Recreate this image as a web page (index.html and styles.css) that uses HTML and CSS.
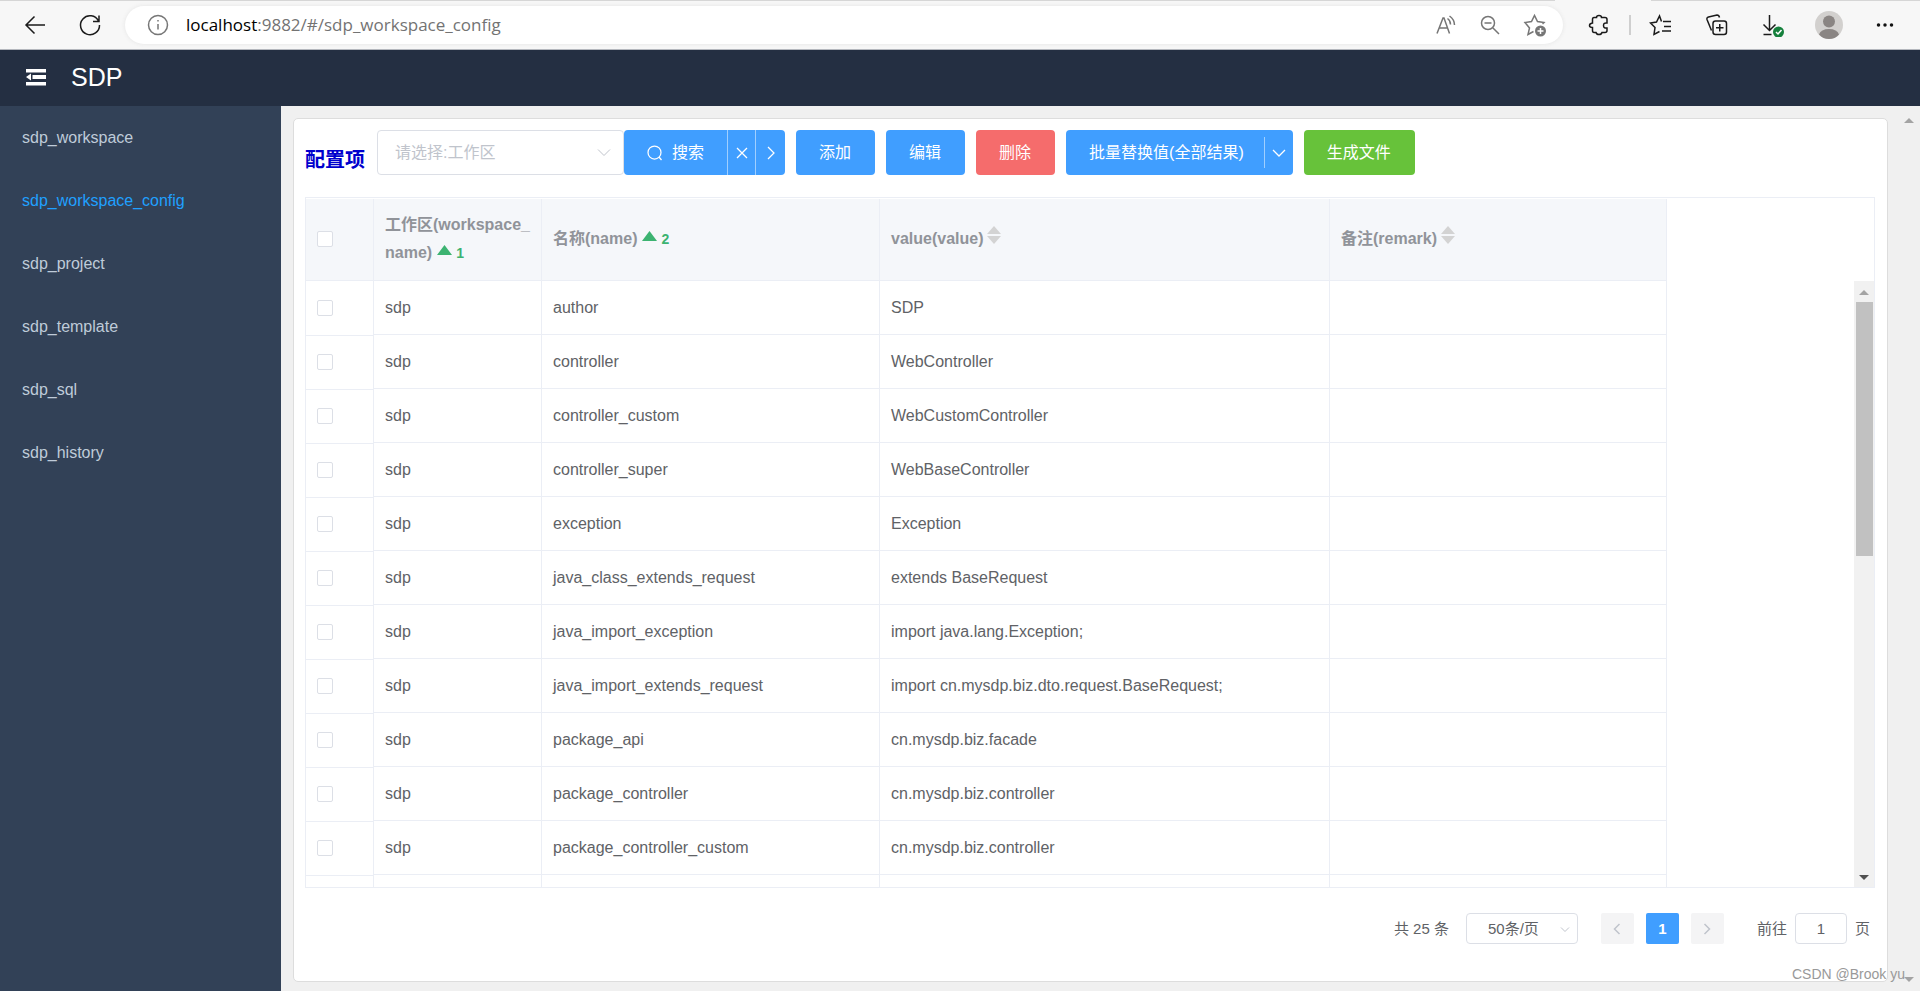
FILE: index.html
```html
<!DOCTYPE html>
<html lang="zh-CN">
<head>
<meta charset="utf-8">
<title>SDP</title>
<link rel="stylesheet" href="styles.css">
</head>
<body>
<header class="browser">
  <button class="tool back" aria-label="Back"><svg width="24" height="24" viewBox="0 0 24 24"><path d="M22 12H3M11.500 3.500L3 12l8.500 8.500"/></svg></button>
  <button class="tool reload" aria-label="Reload"><svg width="24" height="24" viewBox="0 0 24 24"><path d="M20.500 8A9.500 9.500 0 1 0 21.500 12M21 2.500V8.500h-6"/></svg></button>
  <div class="address">
    <svg class="muted" width="22" height="22" viewBox="0 0 22 22"><circle cx="11" cy="11" r="9.500"/><path d="M11 10v5.500M11 6v1.500"/></svg>
    <span class="url"><b>localhost</b>:9882/#/sdp_workspace_config</span>
    <button class="tool muted" aria-label="Read aloud"><svg width="22" height="22" viewBox="0 0 22 22"><path d="M2 19.500L8 4h1l5.500 15.500M4 14h8.500M12.500 4.500q3 2 3 6M14.500 2q5 3.500 5 9"/></svg></button>
    <button class="tool muted" aria-label="Zoom out"><svg width="22" height="22" viewBox="0 0 22 22"><circle cx="9" cy="9" r="6.500"/><path d="M14 14l6 6M5.500 9h7"/></svg></button>
    <button class="tool muted" aria-label="Add favorite"><svg width="24" height="24" viewBox="0 0 24 24"><path d="M10.500 18.500L5 21.500l1.500-6.500L2 9.500l6.500-1L11.500 2.500l3 6 6.500 1-1.500 1.500"/><circle class="grey-fill" cx="17.500" cy="18" r="5.500"/><path class="white-line" d="M17.500 15v6M14.500 18h6"/></svg></button>
  </div>
  <button class="tool ext" aria-label="Extensions"><svg width="22" height="22" viewBox="0 0 22 22"><path d="M6 3.500h2.500q0-2 2.500-2t2.500 2H17q2 0 2 2V9q-3.500-.5-3.500 2.500T19 14v2.500q0 2-2 2h-3q-.5 2-3 2t-3-2H6q-1.500 0-1.500-2v-3Q1.500 13.500 1.500 11.500T4.500 9V5.500q0-2 1.500-2z"/></svg></button>
  <i class="split"></i>
  <button class="tool fav" aria-label="Favorites"><svg width="24" height="24" viewBox="0 0 24 24"><path d="M14 8.500h8M15 13.500h7M13 18h9M12.500 8.500L10.500 3 7.500 9l-6 1 4.500 4.500-1 7 5.500-3"/></svg></button>
  <button class="tool" aria-label="Collections"><svg width="24" height="24" viewBox="0 0 24 24"><path d="M6.500 17.500L2 6.500q-.5-2 1.500-2.500L12 2q2 0 2.500 2.500"/><rect x="8" y="8" width="13.500" height="13.500" rx="2.500"/><path d="M14.750 11v7.500M11 14.750h7.500"/></svg></button>
  <button class="tool" aria-label="Downloads"><svg width="24" height="24" viewBox="0 0 24 24"><path d="M8.500 2v15M2.500 11.500l6 6 6-6M2.500 21.500h8"/><circle class="green-fill" cx="17.500" cy="19" r="5.500"/><path class="white-line" d="M15 19l2 2 3.500-4"/></svg></button>
  <button class="tool avatar" aria-label="Profile"><svg width="28" height="28" viewBox="0 0 28 28"><circle cx="14" cy="14" r="14" fill="#d2d0ce" stroke="none"/><circle cx="14" cy="10.500" r="6" fill="#8a8583" stroke="none"/><path d="M4 23.500Q6 18 14 18t10 5.500Q20 28 14 28T4 23.500z" fill="#8a8583" stroke="none"/></svg></button>
  <button class="tool" aria-label="More"><svg width="20" height="20" viewBox="0 0 20 20"><g fill="#111" stroke="none"><circle cx="3.500" cy="10" r="1.750"/><circle cx="10" cy="10" r="1.750"/><circle cx="16.500" cy="10" r="1.750"/></g></svg></button>
</header>

<header class="app-head">
  <button class="fold" aria-label="Toggle menu"><svg width="20" height="17" viewBox="0 0 20 17" fill="#fff"><path d="M0 0h20v3.500H0zM6.500 6h13.500v4H6.500zM0 13h20v3.500H0zM0 8l5-3.500v7z"/></svg></button>
  <span class="brand">SDP</span>
</header>

<div class="layout">
  <nav class="side">
    <a href="#/sdp_workspace">sdp_workspace</a>
    <a class="on" href="#/sdp_workspace_config">sdp_workspace_config</a>
    <a href="#/sdp_project">sdp_project</a>
    <a href="#/sdp_template">sdp_template</a>
    <a href="#/sdp_sql">sdp_sql</a>
    <a href="#/sdp_history">sdp_history</a>
  </nav>
  <main class="main">
    <section class="card">
      <div class="toolbar">
        <h1 class="title">配置项</h1>
        <div class="field">
          <select class="pick" aria-label="工作区"><option>请选择:工作区</option></select>
          <svg class="caret" width="14" height="10" viewBox="0 0 14 10"><path d="M1 1.500l6 6 6-6"/></svg>
        </div>
        <div class="group">
          <button class="btn search"><svg width="16" height="16" viewBox="0 0 16 16"><circle cx="7.500" cy="7.500" r="6.500"/><path d="M12 12l2.500 3"/></svg>搜索</button>
          <button class="btn small" aria-label="清空"><svg width="12" height="12" viewBox="0 0 12 12"><path d="M1 1l10 10M11 1L1 11"/></svg></button>
          <button class="btn small" aria-label="展开"><svg width="12" height="14" viewBox="0 0 12 14"><path d="M3 1l6 6-6 6"/></svg></button>
        </div>
        <div class="actions">
          <button class="btn">添加</button>
          <button class="btn">编辑</button>
          <button class="btn danger">删除</button>
          <div class="group">
            <button class="btn batch">批量替换值(全部结果)</button>
            <button class="btn drop" aria-label="更多"><svg width="14" height="10" viewBox="0 0 14 10"><path d="M1 2l6 6 6-6"/></svg></button>
          </div>
          <button class="btn success">生成文件</button>
        </div>
      </div>

      <div class="grid">
        <table class="table head">
          <colgroup><col class="c1"><col class="c2"><col class="c3"><col class="c4"><col class="c5"></colgroup>
          <thead><tr>
            <th><input class="check" type="checkbox" aria-label="全选"></th>
            <th><span>工作区(workspace_</span><wbr><span>name)</span><svg class="up" width="15" height="10" viewBox="0 0 15 10"><path d="M0 10l7.500-10L15 10z"/></svg><span class="order">1</span></th>
            <th>名称(name)<svg class="up" width="15" height="10" viewBox="0 0 15 10"><path d="M0 10l7.500-10L15 10z"/></svg><span class="order">2</span></th>
            <th>value(value)<svg class="both" width="14" height="18" viewBox="0 0 14 18"><path d="M0 8l7-8 7 8zM0 10h14l-7 8z"/></svg></th>
            <th>备注(remark)<svg class="both" width="14" height="18" viewBox="0 0 14 18"><path d="M0 8l7-8 7 8zM0 10h14l-7 8z"/></svg></th>
          </tr></thead>
        </table>
        <div class="scroller">
          <div class="rows">
            <table class="table">
              <colgroup><col class="c1"><col class="c2"><col class="c3"><col class="c4"><col class="c5"></colgroup>
              <tbody>
                <tr><td><input class="check" type="checkbox" aria-label="author"></td><td>sdp</td><td>author</td><td>SDP</td><td></td></tr>
                <tr><td><input class="check" type="checkbox" aria-label="controller"></td><td>sdp</td><td>controller</td><td>WebController</td><td></td></tr>
                <tr><td><input class="check" type="checkbox" aria-label="controller_custom"></td><td>sdp</td><td>controller_custom</td><td>WebCustomController</td><td></td></tr>
                <tr><td><input class="check" type="checkbox" aria-label="controller_super"></td><td>sdp</td><td>controller_super</td><td>WebBaseController</td><td></td></tr>
                <tr><td><input class="check" type="checkbox" aria-label="exception"></td><td>sdp</td><td>exception</td><td>Exception</td><td></td></tr>
                <tr><td><input class="check" type="checkbox" aria-label="java_class_extends_request"></td><td>sdp</td><td>java_class_extends_request</td><td>extends BaseRequest</td><td></td></tr>
                <tr><td><input class="check" type="checkbox" aria-label="java_import_exception"></td><td>sdp</td><td>java_import_exception</td><td>import java.lang.Exception;</td><td></td></tr>
                <tr><td><input class="check" type="checkbox" aria-label="java_import_extends_request"></td><td>sdp</td><td>java_import_extends_request</td><td>import cn.mysdp.biz.dto.request.BaseRequest;</td><td></td></tr>
                <tr><td><input class="check" type="checkbox" aria-label="package_api"></td><td>sdp</td><td>package_api</td><td>cn.mysdp.biz.facade</td><td></td></tr>
                <tr><td><input class="check" type="checkbox" aria-label="package_controller"></td><td>sdp</td><td>package_controller</td><td>cn.mysdp.biz.controller</td><td></td></tr>
                <tr><td><input class="check" type="checkbox" aria-label="package_controller_custom"></td><td>sdp</td><td>package_controller_custom</td><td>cn.mysdp.biz.controller</td><td></td></tr>
                <tr><td></td><td></td><td></td><td></td><td></td></tr>
              </tbody>
            </table>
          </div>
          <div class="bar">
            <svg width="10" height="5" viewBox="0 0 10 5" fill="#a3a3a3"><path d="M0 5l5-5 5 5z"/></svg>
            <i class="thumb"></i>
            <svg width="10" height="5" viewBox="0 0 10 5" fill="#505050"><path d="M0 0h10L5 5z"/></svg>
          </div>
        </div>
      </div>

      <div class="pager">
        <span class="total">共 25 条</span>
        <div class="field size">
          <select class="pick" aria-label="每页条数"><option>50条/页</option></select>
          <svg class="caret" width="10" height="8" viewBox="0 0 10 8"><path d="M1 1.500l4 4 4-4"/></svg>
        </div>
        <button class="page" aria-label="上一页"><svg width="8" height="12" viewBox="0 0 8 12"><path d="M6.500 1l-5 5 5 5"/></svg></button>
        <button class="page now">1</button>
        <button class="page" aria-label="下一页"><svg width="8" height="12" viewBox="0 0 8 12"><path d="M1.500 1l5 5-5 5"/></svg></button>
        <label class="jump">前往<input type="text" value="1">页</label>
      </div>
    </section>
    <div class="page-bar">
      <svg width="10" height="5" viewBox="0 0 10 5" fill="#a3a3a3"><path d="M0 5l5-5 5 5z"/></svg>
      <svg width="10" height="5" viewBox="0 0 10 5" fill="#a3a3a3"><path d="M0 0h10L5 5z"/></svg>
    </div>
    <span class="mark">CSDN @Brook yu</span>
  </main>
</div>
</body>
</html>
```
FILE: styles.css
```css
* { box-sizing: border-box; }
body {
  margin: 0;
  height: 100vh;
  display: flex;
  flex-direction: column;
  overflow: hidden;
  font: 16px/28px "Liberation Sans", Arial, "Noto Sans CJK SC", sans-serif;
  color: #606266;
}
button, input, select { font: inherit; color: inherit; margin: 0; }
button { border: 0; padding: 0; background: none; cursor: pointer; }
svg { flex: none; }

/* Browser toolbar; the line along the top breaks under the active tab */
.browser {
  flex: none;
  height: 50px;
  display: flex;
  align-items: center;
  padding: 1px 25px 0 23px;
  background: linear-gradient(90deg, #d6d6d6 81%, #f7f7f7 81%, #f7f7f7 86%, #d6d6d6 86%) 0 0 / 100% 1px no-repeat #f7f7f7;
  border-bottom: 1px solid #b4b7bd;
}
.tool { display: flex; }
.browser svg { fill: none; stroke: #1b1b1b; stroke-width: 1.500; }
.browser .muted, .browser .muted svg { stroke: #767676; }
.browser .grey-fill { fill: #767676; stroke: none; }
.browser .green-fill { fill: #15803c; stroke: none; }
.browser .white-line { stroke: #fff; }
.address {
  flex: 1;
  height: 38px;
  display: flex;
  align-items: center;
  gap: 22px;
  padding: 0 16px 0 22px;
  border-radius: 19px;
  background: #fff;
  box-shadow: 0 0 4px #e4e4e4;
}
.url {
  flex: 1;
  margin-left: -5px;
  font-family: "Open Sans", "Noto Sans", sans-serif;
  font-size: 17px;
  color: #737373;
}
.url b { font-weight: 400; color: #000; }
.ext { margin: 0 19px 0 25px; }
.split { width: 2px; height: 20px; background: #cfcfcf; }
.fav { margin-left: 18px; }
.browser .tool + .tool { margin-left: 32px; }
.browser > .tool.reload { margin: 0 23px 0 31px; }
.browser > .tool.avatar { margin-left: 30px; }
.address .tool + .tool { margin-left: 0; }

/* Application header */
.app-head {
  flex: none;
  height: 56px;
  display: flex;
  align-items: center;
  gap: 25px;
  padding: 0 26px 2px;
  background: #242f42;
  color: #fff;
}
.fold { display: flex; }
.brand { font-size: 25px; }

.layout { flex: 1; min-height: 0; display: flex; }
.side { flex: none; width: 281px; background: #324157; }
.side a {
  display: block;
  padding: 0 22px;
  line-height: 63px;
  color: #bfcbd9;
  text-decoration: none;
}
.side a.on { color: #20a0ff; }

.main {
  position: relative;
  flex: 1;
  min-width: 0;
  display: flex;
  padding: 12px 0 9px 12px;
  background: #f0f0f0;
}
.card {
  flex: 1;
  min-width: 0;
  display: flex;
  flex-direction: column;
  padding: 11px 12px 37px 11px;
  background: #fff;
  border: 1px solid #ddd;
  border-radius: 5px;
}
.page-bar {
  flex: none;
  width: 32px;
  display: flex;
  flex-direction: column;
  align-items: flex-end;
  justify-content: space-between;
  padding: 0 6px 0 0;
}
.mark {
  position: absolute;
  right: 15px;
  bottom: 3px;
  font-size: 14px;
  color: #999;
}

/* Toolbar */
.toolbar { display: flex; margin-bottom: 22px; }
.title {
  margin: 0 12px 0 0;
  padding-top: 15px;
  font-size: 20px;
  line-height: 30px;
  font-weight: 700;
  color: #0000cd;
}
.field { position: relative; width: 247px; }
.pick {
  appearance: none;
  width: 100%;
  height: 45px;
  padding: 0 36px 0 17px;
  border: 1px solid #dcdfe6;
  border-radius: 4px;
  background: #fff;
  color: #c0c4cc;
}
.caret {
  position: absolute;
  right: 13px;
  top: 50%;
  margin-top: -5px;
  pointer-events: none;
}
.caret, .btn svg, .page svg { fill: none; stroke: #c0c4cc; }
.btn svg { stroke: #fff; stroke-width: 1.250; }
.group { display: flex; }
.btn {
  display: flex;
  align-items: center;
  justify-content: center;
  height: 45px;
  padding: 0 23px;
  border-radius: 4px;
  background: #409eff;
  color: #fff;
}
.actions > .btn { padding: 0 24px 0 23px; }
.group .btn { border-radius: 0; }
.group .btn:first-child { border-radius: 4px 0 0 4px; }
.group .btn:last-child { border-radius: 0 4px 4px 0; }
.btn.search { gap: 9px; }
.btn.small { width: 28px; padding: 0; border-left: 1px solid #a0cfff; }
.btn.small:last-child { width: 30px; }
.btn.batch { padding-right: 20px; }
.btn.drop {
  padding: 0 7px 0 8px;
  background: linear-gradient(#a0cfff, #a0cfff) 0 50% / 1px 31px no-repeat #409eff;
}
.btn.danger { background: #f56c6c; }
.btn.success { background: #67c23a; }
.actions { display: flex; gap: 11px; margin-left: 11px; }

/* Table */
.grid {
  flex: 1;
  min-height: 0;
  display: flex;
  flex-direction: column;
  padding-top: 1px;
  border: 1px solid #ebeef5;
}
.table { width: 1361px; table-layout: fixed; border-collapse: separate; border-spacing: 0; }
.c1 { width: 68px; }
.c2 { width: 168px; }
.c3 { width: 338px; }
.c4 { width: 450px; }
.c5 { width: 337px; }
.table th, .table td {
  padding: 0 11px;
  border-right: 1px solid #ebeef5;
  border-bottom: 1px solid #ebeef5;
  text-align: left;
  vertical-align: middle;
}
.table th {
  height: 82px;
  padding-bottom: 1px;
  background: #f5f7fa;
  color: #909399;
}
.table td { height: 54px; }
.table td:first-child { border-bottom: 0; box-shadow: 0 1px 0 #ebeef5; }
.check {
  appearance: none;
  display: block;
  width: 16px;
  height: 16px;
  border: 1px solid #dcdfe6;
  border-radius: 2px;
  background: #fff;
}
.up { margin: 0 4px 3px 5px; fill: #3cb371; }
.both { margin-left: 4px; fill: #d3d3d3; }
.order { font-size: 14px; color: #3cb371; }
.scroller { flex: 1; min-height: 0; display: flex; }
.rows { flex: 1; min-width: 0; overflow: hidden; }
.bar {
  flex: none;
  width: 20px;
  display: flex;
  flex-direction: column;
  align-items: center;
  padding: 9px 0 7px;
  background: #f1f1f1;
}
.thumb { width: 17px; height: 43%; margin: 7px 0 auto; background: #c1c1c1; }

/* Pagination */
.pager {
  display: flex;
  align-items: center;
  justify-content: flex-end;
  margin-top: 25px;
  padding-right: 5px;
  font-size: 15px;
}
.size { width: 112px; margin: 0 23px 0 17px; }
.size .pick { display: block; height: 31px; padding: 0 21px; color: #606266; }
.size .caret { right: 8px; margin-top: -3px; }
.page {
  display: flex;
  align-items: center;
  justify-content: center;
  width: 33px;
  height: 31px;
  margin-right: 12px;
  border-radius: 2px;
  background: #f4f4f5;
}
.page svg { stroke-width: 1.500; }
.page.now { background: #409eff; color: #fff; font-weight: 700; }
.jump { display: flex; align-items: center; gap: 8px; margin-left: 21px; }
.jump input {
  width: 52px;
  height: 31px;
  padding: 0;
  border: 1px solid #dcdfe6;
  border-radius: 4px;
  background: #fff;
  text-align: center;
}
```
